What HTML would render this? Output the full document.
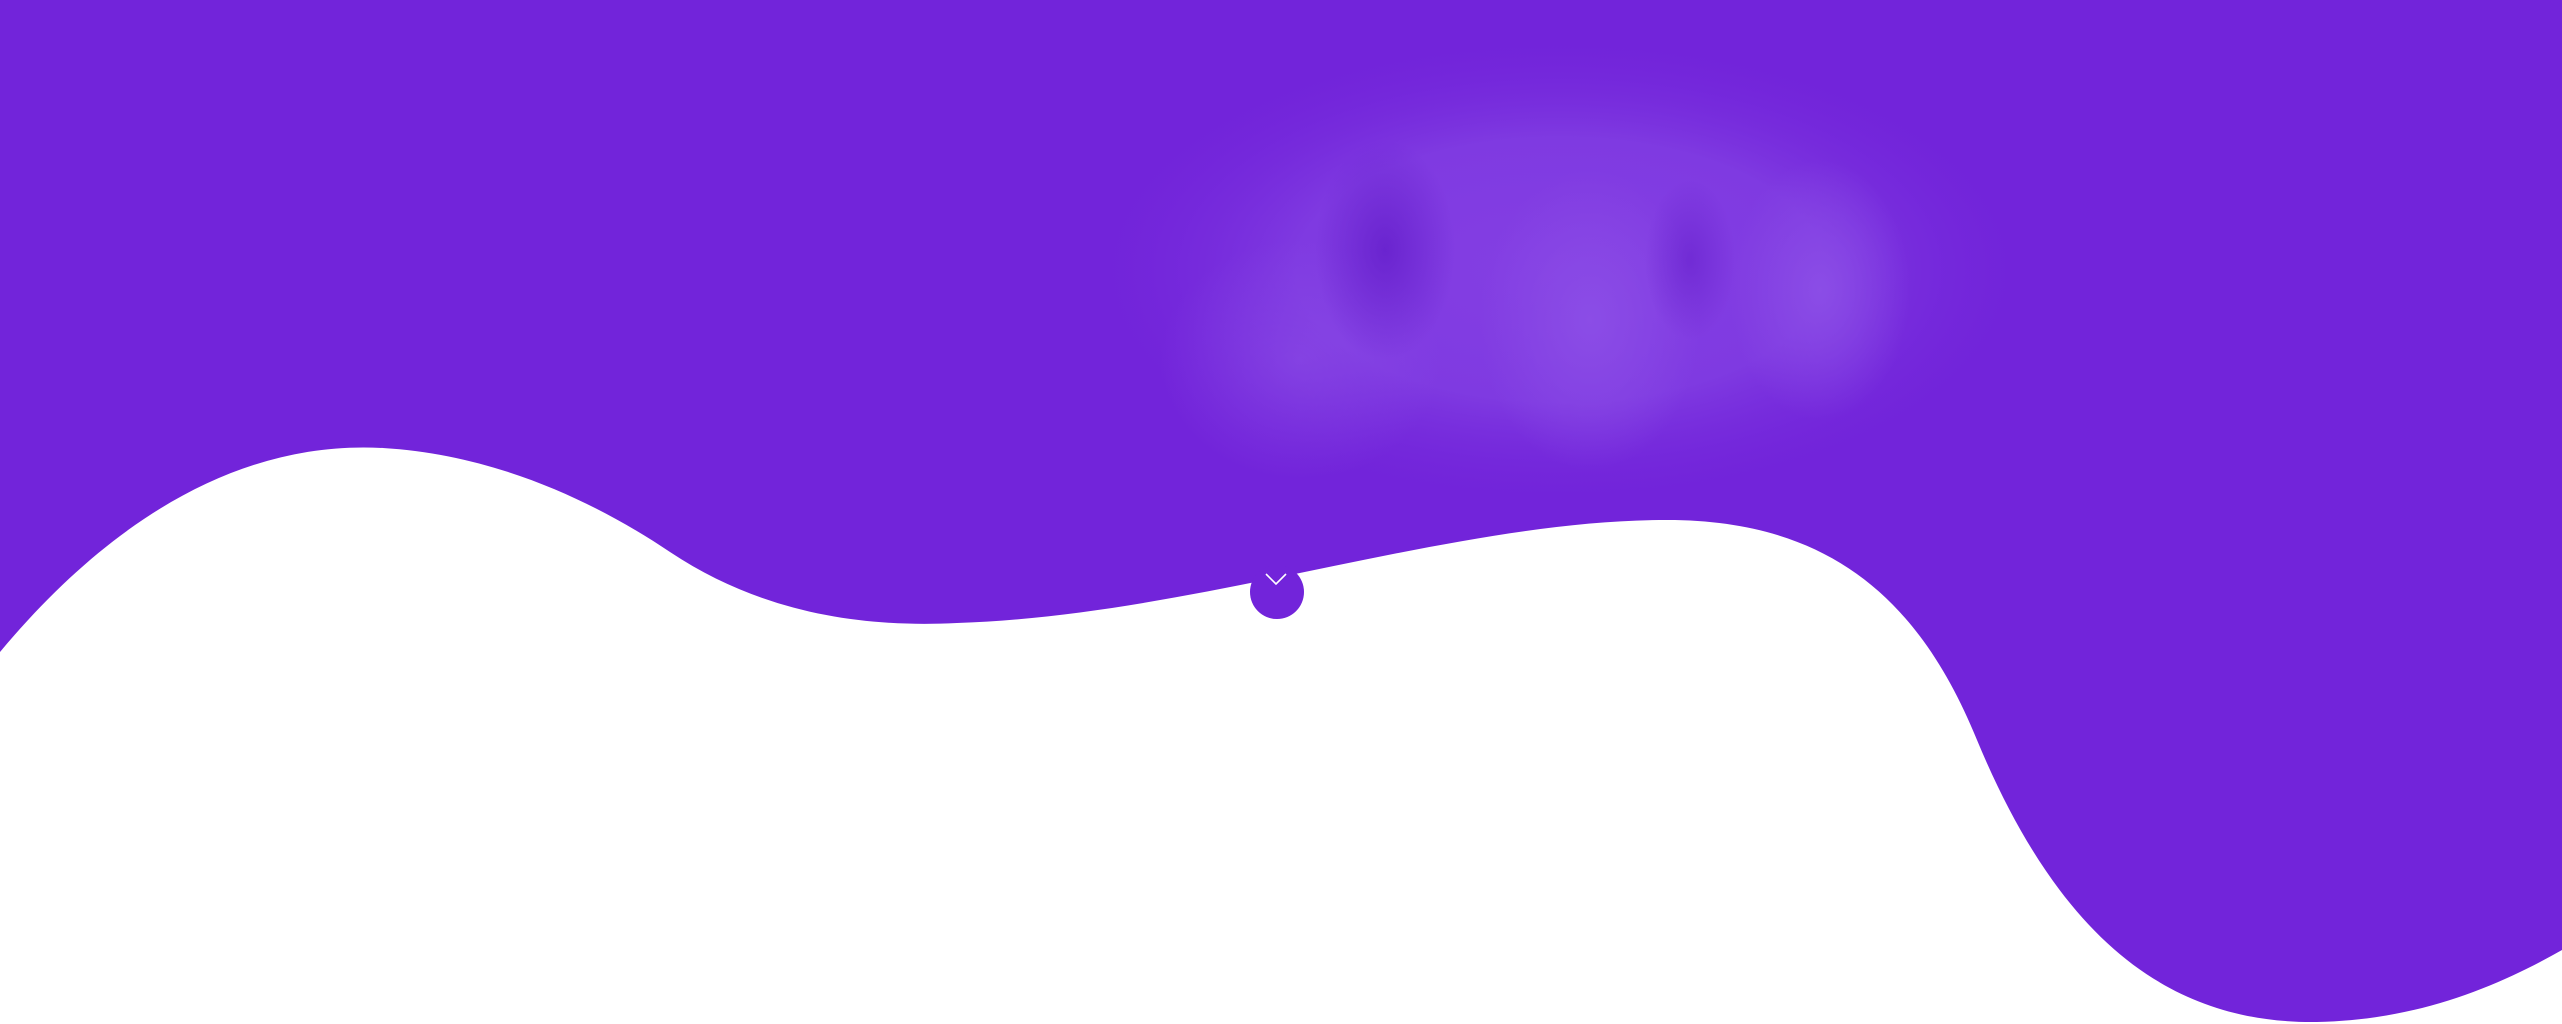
<!DOCTYPE html>
<html><head><meta charset="utf-8"><style>
html,body{margin:0;padding:0;width:2562px;height:1024px;overflow:hidden;background:#7224DA}
.ph{position:absolute;left:0;top:0;width:2562px;height:1024px}
</style></head><body>
<svg class="ph" width="2562" height="1024" viewBox="0 0 2562 1024">
<defs>
<radialGradient id="g1" cx="0.5" cy="0.5" r="0.5">
<stop offset="0" stop-color="#843fe3"/><stop offset="0.55" stop-color="#7f3ae1"/><stop offset="1" stop-color="#7224DA" stop-opacity="0"/>
</radialGradient>
<radialGradient id="g2" cx="0.5" cy="0.5" r="0.5"><stop offset="0" stop-color="#8b4de6"/><stop offset="1" stop-color="#8b4de6" stop-opacity="0"/></radialGradient>
<radialGradient id="g3" cx="0.5" cy="0.5" r="0.5"><stop offset="0" stop-color="#6a24cf"/><stop offset="1" stop-color="#6a24cf" stop-opacity="0"/></radialGradient>
</defs>
<ellipse cx="1560" cy="270" rx="480" ry="240" fill="url(#g1)"/>
<ellipse cx="1590" cy="320" rx="110" ry="150" fill="url(#g2)"/>
<ellipse cx="1820" cy="290" rx="90" ry="130" fill="url(#g2)"/>
<ellipse cx="1300" cy="360" rx="140" ry="120" fill="url(#g2)" opacity="0.6"/>
<ellipse cx="1385" cy="250" rx="70" ry="110" fill="url(#g3)"/>
<ellipse cx="1690" cy="260" rx="45" ry="80" fill="url(#g3)" opacity="0.7"/>
<path fill="#ffffff" d="M0,652 C110,520 240,440 383,448 C500,455 600,505 670,552 C760,612 860,628 957,623 C1200,615 1450,520 1667,520 C1830,520 1920,600 1977,740 C2060,940 2170,1024 2317,1022 C2420,1020 2500,985 2562,950 L2562,1024 L0,1024 Z"/>
<circle cx="1277" cy="592" r="27" fill="#7224DA"/>
<path d="M1266,574 L1276,584 L1286,574" fill="none" stroke="#ffffff" stroke-width="1.6"/>
</svg>
</body></html>
